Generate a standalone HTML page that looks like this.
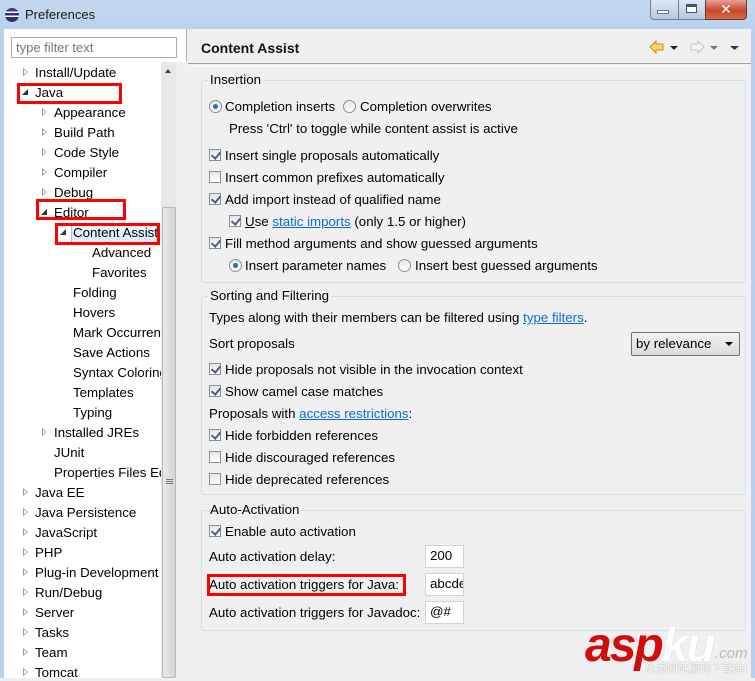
<!DOCTYPE html>
<html><head><meta charset="utf-8"><style>
*{margin:0;padding:0;box-sizing:border-box}
body{width:755px;height:678px;overflow:hidden;background:#f0f0f0;font-family:"Liberation Sans","DejaVu Sans",sans-serif;font-size:13.3px;color:#000;position:relative}
.a{position:absolute;white-space:nowrap}
.t{position:absolute;white-space:nowrap;line-height:16px}
.cb{position:absolute;width:12px;height:12px;border:1px solid #8f8f8f;background:linear-gradient(#e6e6e6,#fff)}
.cb.on::after{content:"";position:absolute;left:3px;top:0px;width:4px;height:7px;border:solid #4a5d8a;border-width:0 2px 2px 0;transform:rotate(40deg)}
.rd{position:absolute;width:13px;height:13px;border:1px solid #8f8f8f;border-radius:50%;background:linear-gradient(#e6e6e6,#fff)}
.rd.on::after{content:"";position:absolute;left:3px;top:3px;width:5px;height:5px;border-radius:50%;background:#2a6fbf}
.grp{position:absolute;border:1px solid #d5dfe5;border-radius:3px}
.gl{position:absolute;background:#f0f0f0;padding:0 2px;line-height:16px}
.lk{color:#0b6bd6;text-decoration:underline}
.in{position:absolute;background:#fff;border:1px solid #cfd4da;padding:3px 0 0 4px;line-height:14px;overflow:hidden}
.red{position:absolute;border:3px solid #f00}
.ar{position:absolute;width:0;height:0;border-left:5px solid #9a9a9a;border-top:4px solid transparent;border-bottom:4px solid transparent}
.ar::after{content:"";position:absolute;left:-4px;top:-2px;border-left:3px solid #fff;border-top:2px solid transparent;border-bottom:2px solid transparent}
.ex{position:absolute;width:0;height:0;border-right:6px solid #333;border-top:6px solid transparent}
</style></head><body>
<div class="a" style="left:0;top:0;width:755px;height:30px;background:linear-gradient(#c4d9f0,#b9d1ec)"></div>
<div class="a" style="left:0;top:28px;width:4px;height:650px;background:#b9d1ec"></div>
<div class="a" style="left:751px;top:28px;width:4px;height:650px;background:#b9d1ec"></div>
<div class="a" style="left:5px;top:8px;width:14px;height:14px;border-radius:50%;background:linear-gradient(#3b3b8a 0 25%,#fff 25% 35%,#2d2d7a 35% 55%,#fff 55% 65%,#2d2d7a 65%)"></div>
<div class="t" style="left:25px;top:7px;font-size:13px;color:#1b1b1b">Preferences</div>
<div class="a" style="left:650px;top:0;width:56px;height:20px;border:1px solid #6d7e97;border-top:0;border-radius:0 0 0 4px;background:linear-gradient(#dde8f4,#b6c8de)"></div>
<div class="a" style="left:678px;top:0;width:1px;height:19px;background:#6d7e97"></div>
<div class="a" style="left:657px;top:10px;width:12px;height:4px;border:1px solid #66768c;background:#fff"></div>
<div class="a" style="left:686px;top:4px;width:11px;height:9px;border:1px solid #44546a;border-top-width:3px;background:#fff"></div>
<div class="a" style="left:705px;top:0;width:42px;height:20px;border:1px solid #6d3a30;border-top:0;border-radius:0 0 4px 0;background:linear-gradient(#e7a194,#c8462c 55%,#d66a4a)"></div>
<div class="a" style="left:705px;top:1px;width:42px;text-align:center;color:#fff;font-weight:bold;font-size:14px;line-height:16px">✕</div>

<div class="a" style="left:4px;top:29px;width:183px;height:649px;background:#fff;border-right:1px solid #b0b0b0"></div>
<div class="a" style="left:161px;top:62px;width:15px;height:616px;background:#e8e8e8"></div>
<div class="a" style="left:162px;top:207px;width:14px;height:471px;background:linear-gradient(90deg,#eaeaea,#d4d4d4);border:1px solid #b8b8b8;border-radius:2px"></div>
<div class="a" style="left:166px;top:479px;width:7px;height:1px;border-top:1px solid #777;box-shadow:0 2px #777,0 4px #777"></div>
<div class="a" style="left:165px;top:69px;border-bottom:4px solid #444;border-left:3px solid transparent;border-right:3px solid transparent"></div>
<div class="a" style="left:176px;top:62px;width:11px;height:616px;background:#f0f0f0"></div>
<div class="in" style="left:11px;top:37px;width:166px;height:21px;border-color:#abadb3;color:#777;font-size:13px">type filter text</div>

<div class="a" style="left:71px;top:224px;width:86px;height:19px;background:linear-gradient(#eef6fd,#d8eafb);border:1px solid #9cc6ef;border-radius:2px"></div>

<div class="ar" style="left:23px;top:68px"></div><div class="t" style="left:35px;top:65px">Install/Update</div>
<div class="ex" style="left:22px;top:89px"></div><div class="t" style="left:35px;top:85px">Java</div>
<div class="ar" style="left:42px;top:108px"></div><div class="t" style="left:54px;top:105px">Appearance</div>
<div class="ar" style="left:42px;top:128px"></div><div class="t" style="left:54px;top:125px">Build Path</div>
<div class="ar" style="left:42px;top:148px"></div><div class="t" style="left:54px;top:145px">Code Style</div>
<div class="ar" style="left:42px;top:168px"></div><div class="t" style="left:54px;top:165px">Compiler</div>
<div class="ar" style="left:42px;top:188px"></div><div class="t" style="left:54px;top:185px">Debug</div>
<div class="ex" style="left:41px;top:209px"></div><div class="t" style="left:54px;top:205px">Editor</div>
<div class="ex" style="left:60px;top:229px"></div><div class="t" style="left:73px;top:225px">Content Assist</div>
<div class="t" style="left:92px;top:245px">Advanced</div>
<div class="t" style="left:92px;top:265px">Favorites</div>
<div class="t" style="left:73px;top:285px">Folding</div>
<div class="t" style="left:73px;top:305px">Hovers</div>
<div class="t" style="left:73px;top:325px;width:88px;overflow:hidden">Mark Occurrences</div>
<div class="t" style="left:73px;top:345px">Save Actions</div>
<div class="t" style="left:73px;top:365px;width:88px;overflow:hidden">Syntax Coloring</div>
<div class="t" style="left:73px;top:385px">Templates</div>
<div class="t" style="left:73px;top:405px">Typing</div>
<div class="ar" style="left:42px;top:428px"></div><div class="t" style="left:54px;top:425px">Installed JREs</div>
<div class="t" style="left:54px;top:445px">JUnit</div>
<div class="t" style="left:54px;top:465px;width:107px;overflow:hidden">Properties Files Editor</div>
<div class="ar" style="left:23px;top:488px"></div><div class="t" style="left:35px;top:485px">Java EE</div>
<div class="ar" style="left:23px;top:508px"></div><div class="t" style="left:35px;top:505px">Java Persistence</div>
<div class="ar" style="left:23px;top:528px"></div><div class="t" style="left:35px;top:525px">JavaScript</div>
<div class="ar" style="left:23px;top:548px"></div><div class="t" style="left:35px;top:545px">PHP</div>
<div class="ar" style="left:23px;top:568px"></div><div class="t" style="left:35px;top:565px">Plug-in Development</div>
<div class="ar" style="left:23px;top:588px"></div><div class="t" style="left:35px;top:585px">Run/Debug</div>
<div class="ar" style="left:23px;top:608px"></div><div class="t" style="left:35px;top:605px">Server</div>
<div class="ar" style="left:23px;top:628px"></div><div class="t" style="left:35px;top:625px">Tasks</div>
<div class="ar" style="left:23px;top:648px"></div><div class="t" style="left:35px;top:645px">Team</div>
<div class="ar" style="left:23px;top:668px"></div><div class="t" style="left:35px;top:665px">Tomcat</div>

<div class="red" style="left:17px;top:83px;width:105px;height:21px"></div>
<div class="red" style="left:36px;top:199px;width:90px;height:21px"></div>
<div class="red" style="left:55px;top:223px;width:105px;height:22px"></div>

<div class="a" style="left:188px;top:29px;width:563px;height:35px;background:#f0f0f0;border-bottom:1px solid #a0a0a0"></div>
<div class="t" style="left:201px;top:40px;font-size:14px;font-weight:bold;color:#111">Content Assist</div>
<svg class="a" style="left:648px;top:40px" width="100" height="16"><path d="M2 7 L8 1 L8 4 L15 4 L15 10 L8 10 L8 13 Z" fill="#fbd76a" stroke="#c9920f"/><path d="M22 6 L30 6 L26 10 Z" fill="#222"/><path d="M56 7 L50 1 L50 4 L43 4 L43 10 L50 10 L50 13 Z" fill="#f4f4f4" stroke="#c4c4c4"/><path d="M62 6 L70 6 L66 10 Z" fill="#777"/><path d="M82 6 L91 6 L86.5 10 Z" fill="#33335a"/></svg>
<div class="a" style="left:189px;top:66px;width:556px;height:1px;background:#fff"></div>

<div class="grp" style="left:201px;top:80px;width:545px;height:203px"></div>
<div class="gl" style="left:208px;top:72px">Insertion</div>
<div class="rd on" style="left:209px;top:100px"></div><div class="t" style="left:225px;top:99px">Completion inserts</div>
<div class="rd" style="left:343px;top:100px"></div><div class="t" style="left:360px;top:99px">Completion overwrites</div>
<div class="t" style="left:229px;top:121px">Press 'Ctrl' to toggle while content assist is active</div>
<div class="cb on" style="left:209px;top:149px"></div><div class="t" style="left:225px;top:148px">Insert single proposals automatically</div>
<div class="cb" style="left:209px;top:171px"></div><div class="t" style="left:225px;top:170px">Insert common prefixes automatically</div>
<div class="cb on" style="left:209px;top:193px"></div><div class="t" style="left:225px;top:192px">Add import instead of qualified name</div>
<div class="cb on" style="left:229px;top:215px"></div><div class="t" style="left:245px;top:214px"><u>U</u>se <span class="lk">static imports</span> (only 1.5 or higher)</div>
<div class="cb on" style="left:209px;top:237px"></div><div class="t" style="left:225px;top:236px">Fill method arguments and show guessed arguments</div>
<div class="rd on" style="left:229px;top:259px"></div><div class="t" style="left:245px;top:258px">Insert parameter names</div>
<div class="rd" style="left:398px;top:259px"></div><div class="t" style="left:415px;top:258px">Insert best guessed arguments</div>

<div class="grp" style="left:201px;top:296px;width:545px;height:199px"></div>
<div class="gl" style="left:208px;top:288px">Sorting and Filtering</div>
<div class="t" style="left:209px;top:310px">Types along with their members can be filtered using <span class="lk">type filters</span>.</div>
<div class="t" style="left:209px;top:336px">Sort proposals</div>
<div class="a" style="left:631px;top:332px;width:109px;height:24px;border:1px solid #707070;border-radius:2px;background:linear-gradient(#f2f2f2,#dcdcdc);padding:3px 0 0 4px;line-height:16px">by relevance</div>
<div class="a" style="left:725px;top:342px;border-top:4px solid #000;border-left:4px solid transparent;border-right:4px solid transparent"></div>
<div class="cb on" style="left:209px;top:363px"></div><div class="t" style="left:225px;top:362px">Hide proposals not visible in the invocation context</div>
<div class="cb on" style="left:209px;top:385px"></div><div class="t" style="left:225px;top:384px">Show camel case matches</div>
<div class="t" style="left:209px;top:406px">Proposals with <span class="lk">access restrictions</span>:</div>
<div class="cb on" style="left:209px;top:429px"></div><div class="t" style="left:225px;top:428px">Hide forbidden references</div>
<div class="cb" style="left:209px;top:451px"></div><div class="t" style="left:225px;top:450px">Hide discouraged references</div>
<div class="cb" style="left:209px;top:473px"></div><div class="t" style="left:225px;top:472px">Hide deprecated references</div>

<div class="grp" style="left:201px;top:510px;width:545px;height:121px"></div>
<div class="gl" style="left:208px;top:502px">Auto-Activation</div>
<div class="cb on" style="left:209px;top:525px"></div><div class="t" style="left:225px;top:524px">Enable auto activation</div>
<div class="t" style="left:209px;top:549px">Auto activation delay:</div>
<div class="t" style="left:209px;top:577px">Auto activation triggers for Java:</div>
<div class="t" style="left:209px;top:605px">Auto activation triggers for Javadoc:</div>
<div class="in" style="left:425px;top:545px;width:39px;height:23px">200</div>
<div class="in" style="left:425px;top:573px;width:39px;height:23px">abcdefg</div>
<div class="in" style="left:425px;top:601px;width:39px;height:23px">@#</div>
<div class="red" style="left:207px;top:574px;width:199px;height:22px"></div>

<div class="a" style="left:585px;top:620px;font-size:48px;font-weight:bold;font-style:italic;color:#d20c0c;letter-spacing:-2px;line-height:52px">asp<span style="color:#fff;text-shadow:0 0 1px #bbb">ku</span></div>
<div class="a" style="left:715px;top:646px;font-size:15px;font-style:italic;color:#bbb;line-height:16px">.com</div>
<div class="a" style="left:645px;top:662px;font-size:11px;color:#fff;text-shadow:0 0 1px #888;font-family:'Noto Sans CJK SC',sans-serif;line-height:13px">免费网站源码下载站!</div>
</body></html>
